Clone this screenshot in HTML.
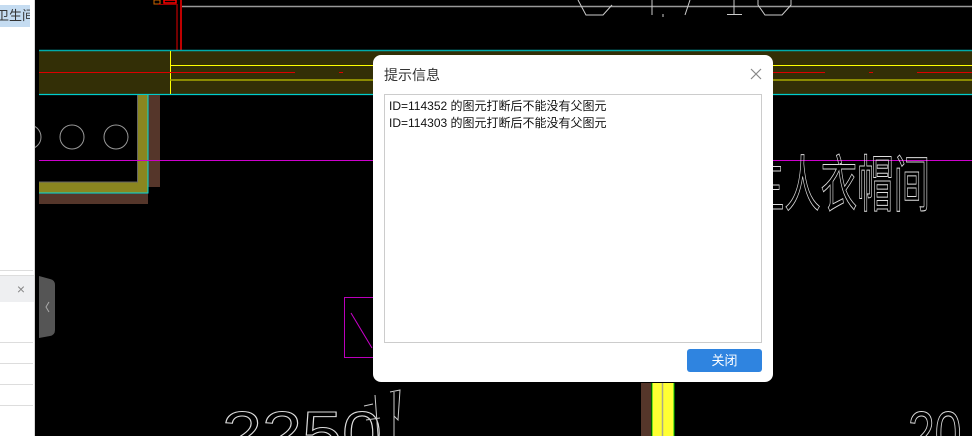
<!DOCTYPE html>
<html><head><meta charset="utf-8"><style>
*{margin:0;padding:0;box-sizing:border-box}
html,body{width:972px;height:436px;overflow:hidden}
body{background:#000;position:relative;font-family:"Liberation Sans","Noto Sans CJK SC",sans-serif}
.left{position:absolute;left:0;top:0;width:35px;height:436px;background:#fff;border-right:1px solid #d8d8d8;overflow:hidden}
.sel{position:absolute;left:0;top:5px;width:30px;height:22px;background:#c5dcf1;font-size:13px;color:#333;line-height:22px;white-space:nowrap;overflow:hidden;text-indent:-4px}
.gp{position:absolute;left:0;top:275px;width:34px;height:27px;background:#eeeff1;border-top:1px solid #ddd;color:#888;font-size:14px;line-height:26px;text-align:right;padding-right:9px}
.ln{position:absolute;left:0;width:33px;height:1px;background:#ddd}
svg{position:absolute;left:0;top:0;overflow:hidden}
.dlg{position:absolute;left:373px;top:55px;width:400px;height:327px;background:#fff;border-radius:8px}
.ttl{position:absolute;left:11px;top:10px;font-size:14px;color:#333}
.ta{position:absolute;left:11px;top:39px;width:378px;height:249px;border:1px solid #ccc;padding:3px 4px;font-size:12px;line-height:17px;color:#111}
.btn{position:absolute;left:314px;top:294px;width:75px;height:23px;background:#2f84e0;border-radius:3px;color:#fff;font-size:13px;text-align:center;line-height:23px}
</style></head><body>
<svg width="972" height="436" viewBox="0 0 972 436">
<line x1="182" y1="6.5" x2="972" y2="6.5" stroke="#999" stroke-width="1.5"/>
<path d="M578 0 L586 15 L603 15 L612 5 M652 0 L652 15 M663 14 L663 17 M690 0 L685 15 M734 0 L734 14 M727 14.5 L742 14.5 M758 0 L758 5 L765 15 L782 15 L791 5 L791 0" fill="none" stroke="#ccc" stroke-width="1"/>
<rect x="154" y="0" width="6" height="4" fill="none" stroke="#c60" stroke-width="1"/>
<rect x="164" y="0" width="12" height="3" fill="none" stroke="#f00" stroke-width="1.5"/>
<line x1="177" y1="4" x2="177" y2="50" stroke="#900" stroke-width="1.5"/>
<line x1="181" y1="0" x2="181" y2="50" stroke="#f00" stroke-width="1.5"/>
<line x1="158" y1="4.5" x2="177" y2="4.5" stroke="#900" stroke-width="1"/>
<rect x="39" y="51" width="933" height="43" fill="#332f06"/>
<line x1="39" y1="50.5" x2="972" y2="50.5" stroke="#0aa" stroke-width="1.5"/>
<line x1="39" y1="94.5" x2="972" y2="94.5" stroke="#0cc" stroke-width="1.2"/>
<line x1="170.5" y1="51" x2="170.5" y2="94" stroke="#ff0" stroke-width="1"/>
<line x1="170" y1="65.5" x2="972" y2="65.5" stroke="#ff0" stroke-width="1"/>
<line x1="170" y1="80" x2="972" y2="80" stroke="#aa0" stroke-width="1.5"/>
<line x1="39" y1="72.5" x2="295" y2="72.5" stroke="#d00" stroke-width="1"/>
<line x1="339" y1="72.5" x2="343" y2="72.5" stroke="#d00" stroke-width="1"/>
<line x1="773" y1="72.5" x2="825" y2="72.5" stroke="#d00" stroke-width="1"/>
<line x1="869" y1="72.5" x2="873" y2="72.5" stroke="#d00" stroke-width="1"/>
<line x1="917" y1="72.5" x2="972" y2="72.5" stroke="#d00" stroke-width="1"/>
<rect x="148" y="95" width="12" height="92" fill="#55362a"/>
<rect x="39" y="193" width="109" height="11" fill="#55362a"/>
<rect x="138" y="95" width="10" height="98" fill="#8a8620"/>
<rect x="39" y="182" width="109" height="11" fill="#8a8620"/>
<polyline points="39,193 148,193 148,95" fill="none" stroke="#0dd" stroke-width="1"/>
<polyline points="39,182 137.5,182 137.5,95" fill="none" stroke="#666" stroke-width="1"/>
<circle cx="72" cy="137" r="12" fill="none" stroke="#999" stroke-width="1"/>
<circle cx="116" cy="137" r="12" fill="none" stroke="#999" stroke-width="1"/>
<circle cx="29" cy="137" r="12" fill="none" stroke="#999" stroke-width="1"/>
<line x1="39" y1="160.5" x2="972" y2="160.5" stroke="#c0c" stroke-width="1"/>
<rect x="344.5" y="297.5" width="30" height="60" fill="none" stroke="#b0b" stroke-width="1"/>
<line x1="351" y1="313" x2="372" y2="348" stroke="#c0c" stroke-width="1"/>
<rect x="641" y="383" width="10" height="53" fill="#55362a"/>
<rect x="652" y="383" width="22" height="53" fill="#ff3"/>
<line x1="662.5" y1="383" x2="662.5" y2="436" stroke="#aa8" stroke-width="1.5"/>
<line x1="652" y1="383" x2="652" y2="436" stroke="#0c0" stroke-width="1"/>
<line x1="674" y1="383" x2="674" y2="436" stroke="#0c0" stroke-width="1"/>
<text transform="translate(748,206) scale(1,1.7)" x="0" y="0" font-size="36" textLength="182" lengthAdjust="spacingAndGlyphs" fill="none" stroke="#ddd" stroke-width="0.6" font-family="Noto Sans CJK SC,sans-serif">主人衣帽间</text>
<text transform="translate(222,455) scale(1,1.3)" x="0" y="0" font-size="48" textLength="160" lengthAdjust="spacingAndGlyphs" fill="none" stroke="#ddd" stroke-width="0.8" font-family="Liberation Sans,sans-serif">2250</text>
<text transform="translate(908,455) scale(1,1.3)" x="0" y="0" font-size="48" fill="none" stroke="#ddd" stroke-width="0.8" font-family="Liberation Sans,sans-serif">20</text>
<path d="M364 406 L373 404 M366 420 L380 418 M390 392 L400 390 L398 420 L394 416 M394 392 L394 436 M375 395 L378 436" fill="none" stroke="#ccc" stroke-width="1"/>
<path d="M39 276 L50 279 Q55 280 55 285 L55 330 Q55 335 50 336 L39 338 Z" fill="#555"/>
<path d="M49 302 L46 307 L49 312" fill="none" stroke="#aaa" stroke-width="1"/>
</svg>
<div class="left">
<div class="sel">卫生间</div>
<div class="gp">×</div>
<div class="ln" style="top:270px"></div>
<div class="ln" style="top:342px"></div>
<div class="ln" style="top:363px"></div>
<div class="ln" style="top:384px"></div>
<div class="ln" style="top:405px"></div>
</div>
<div class="dlg">
<div class="ttl">提示信息</div>
<svg style="left:377px;top:13px" width="12" height="12"><path d="M1 1 L11 11 M11 1 L1 11" stroke="#888" stroke-width="1.2"/></svg>
<div class="ta">ID=114352 的图元打断后不能没有父图元<br>ID=114303 的图元打断后不能没有父图元</div>
<div class="btn">关闭</div>
</div>
</body></html>
